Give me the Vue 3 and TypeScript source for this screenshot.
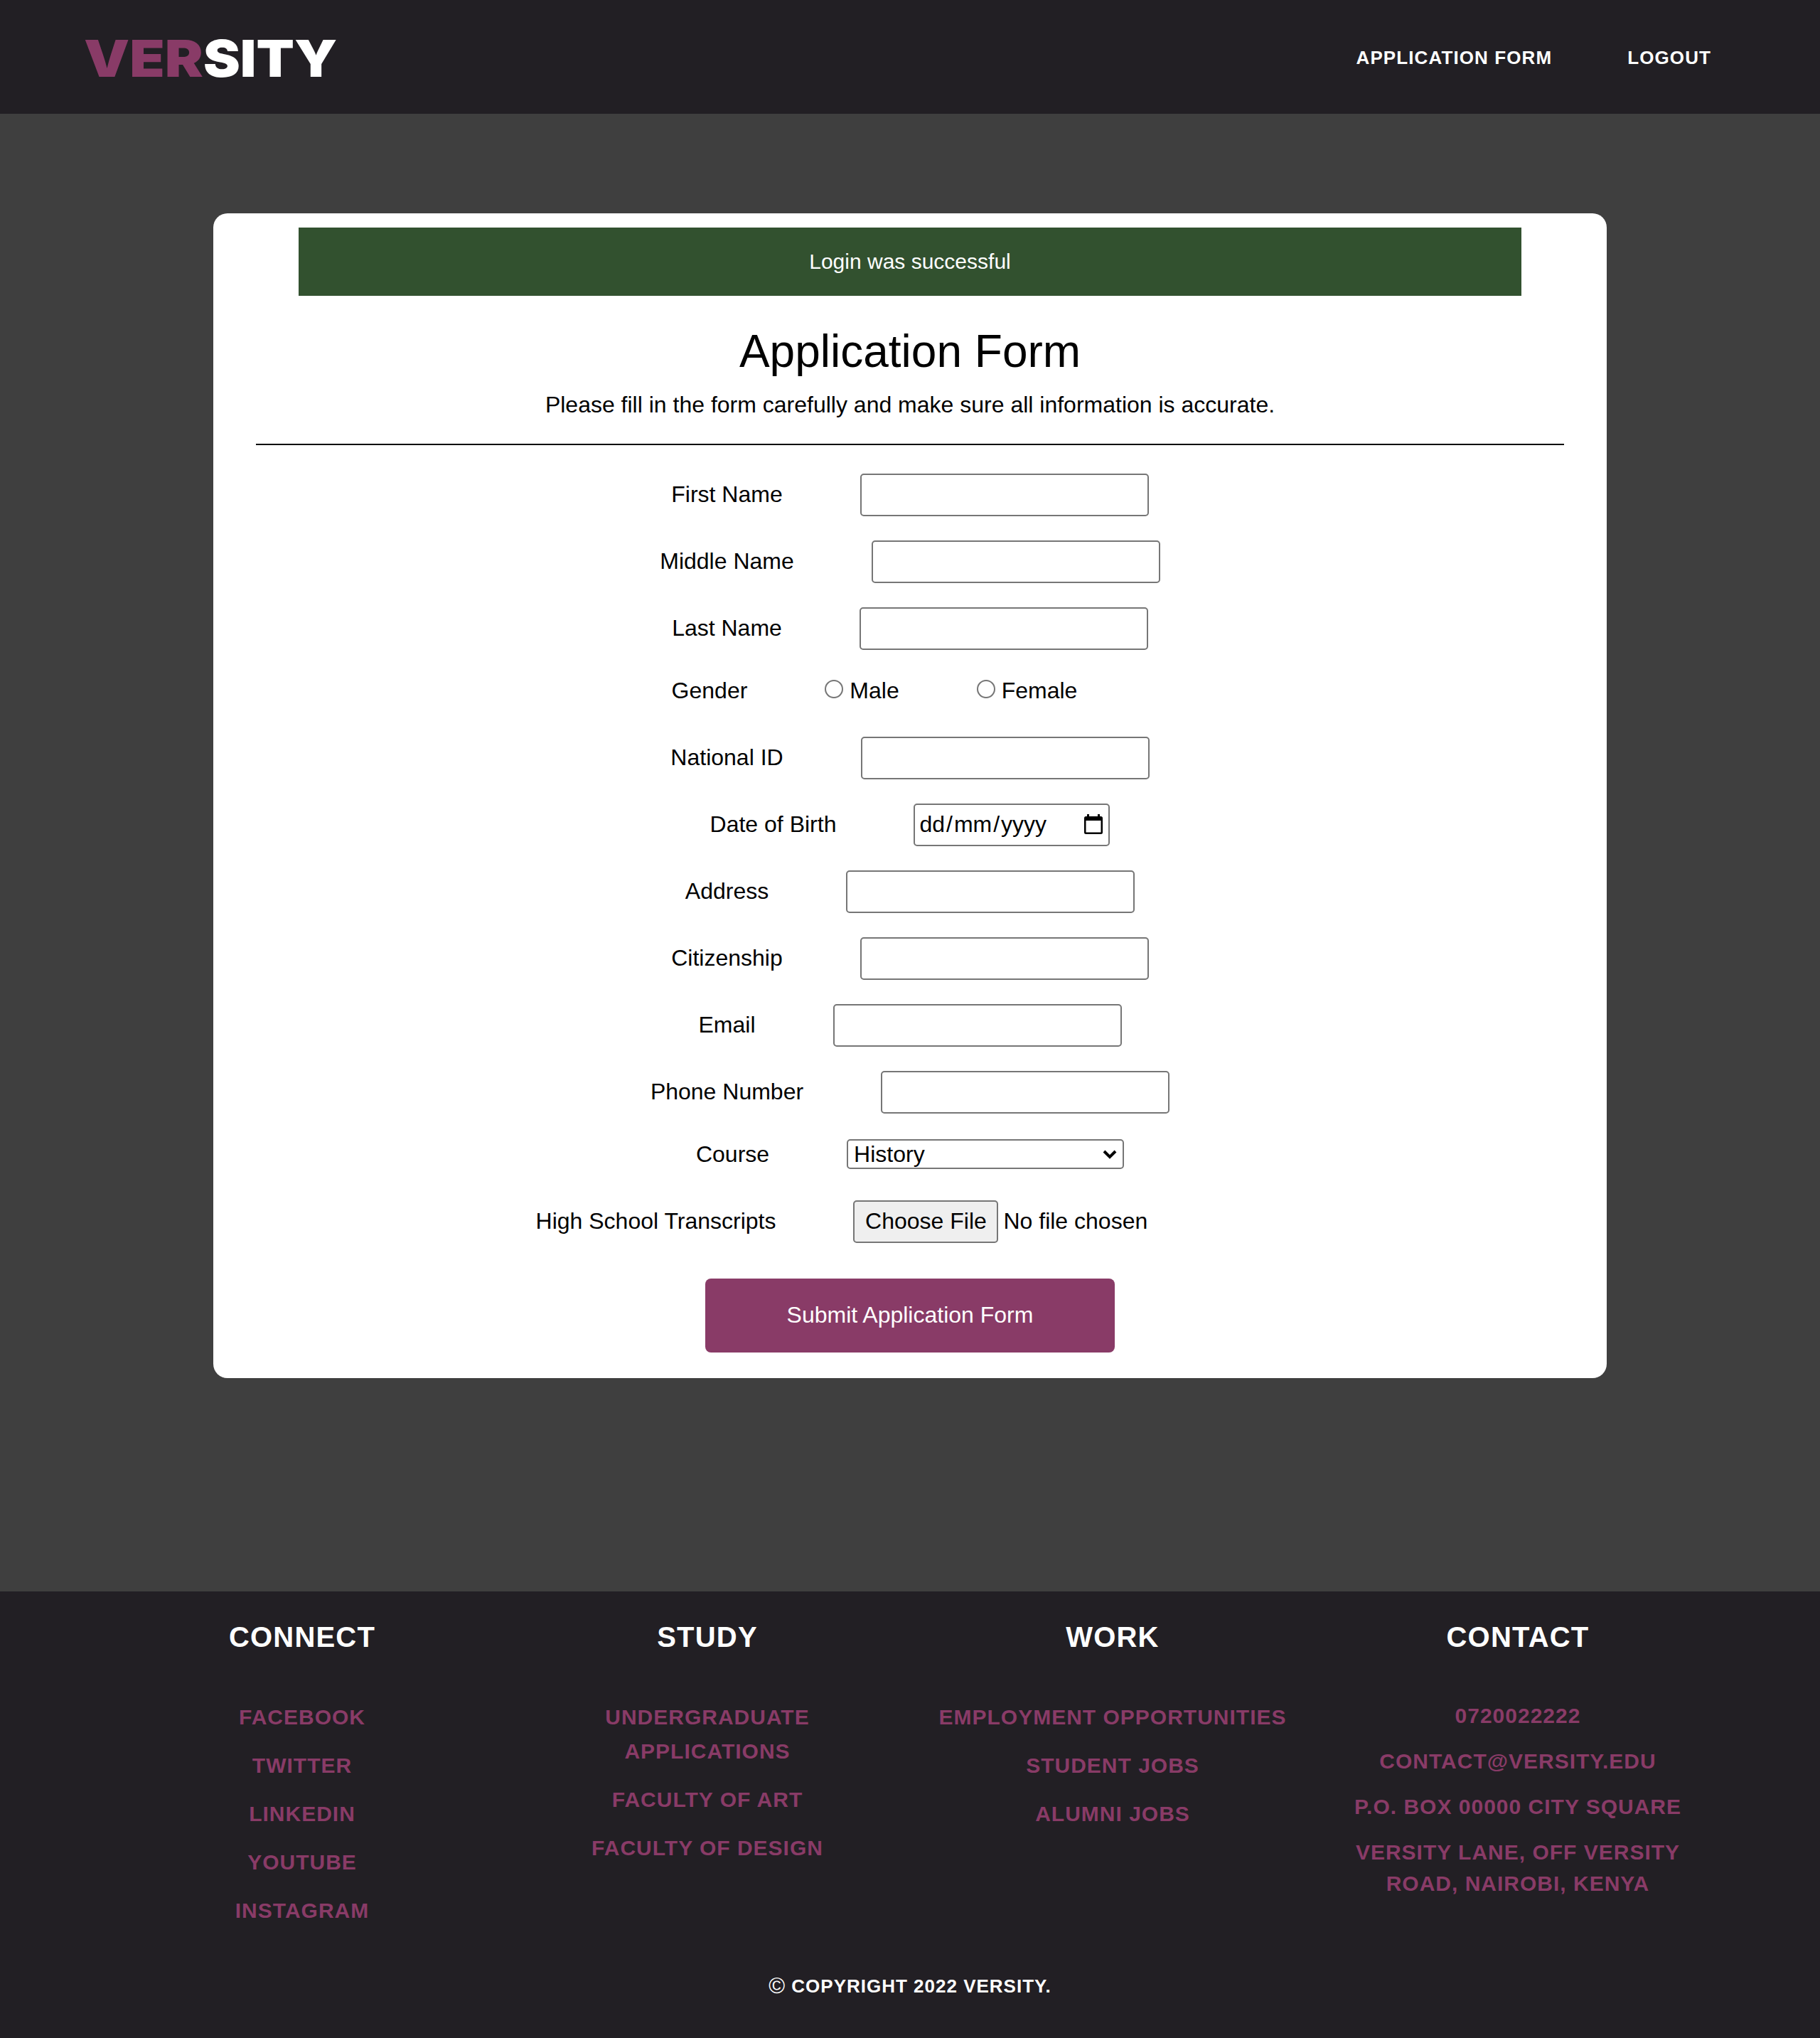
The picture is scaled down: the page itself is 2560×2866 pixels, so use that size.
<script setup lang="ts">
interface Column {
  title: string
  items: string[]
  plain?: boolean
}

const navLinks: string[] = ['Application Form', 'Logout']
const nameFields: string[] = ['First Name', 'Middle Name', 'Last Name']
const contactFields: string[] = ['Address', 'Citizenship', 'Email', 'Phone Number']

const columns: Column[] = [
  { title: 'Connect', items: ['Facebook', 'Twitter', 'LinkedIn', 'YouTube', 'Instagram'] },
  { title: 'Study', items: ['Undergraduate Applications', 'Faculty of Art', 'Faculty of Design'] },
  { title: 'Work', items: ['Employment Opportunities', 'Student Jobs', 'Alumni Jobs'] },
  {
    title: 'Contact',
    plain: true,
    items: ['0720022222', 'contact@versity.edu', 'P.O. Box 00000 City Square', 'Versity Lane, Off Versity Road, Nairobi, Kenya'],
  },
]
</script>

<template>
  <div class="page">
    <header class="nav">
      <div class="logo"><span class="accent">VER</span><span class="rest">SITY</span></div>
      <nav class="links">
        <a v-for="link in navLinks" :key="link">{{ link }}</a>
      </nav>
    </header>

    <main class="main">
      <section class="card">
        <div class="flash">Login was successful</div>
        <h1>Application Form</h1>
        <p class="intro">Please fill in the form carefully and make sure all information is accurate.</p>
        <form class="form" @submit.prevent>
          <div v-for="f in nameFields" :key="f" class="row">
            <label>{{ f }}</label>
            <input type="text" class="box" />
          </div>
          <div class="row short">
            <label>Gender</label>
            <input type="radio" name="gender" class="radio" /><label>Male</label>
            <input type="radio" name="gender" class="radio" /><label class="last">Female</label>
          </div>
          <div class="row">
            <label>National ID</label>
            <input type="text" class="box" />
          </div>
          <div class="row">
            <label>Date of Birth</label>
            <div class="box date">
              <span class="part">dd</span><span>/</span><span class="part">mm</span><span>/</span><span class="part">yyyy</span>
              <svg class="calendar" width="26" height="28" viewBox="0 0 26 28">
                <path fill-rule="evenodd" d="M4 0h3v3h12V0h3v3h1.500a2.500 2.500 0 0 1 2.500 2.500v20a2.500 2.500 0 0 1-2.500 2.500h-21A2.500 2.500 0 0 1 0 25.500v-20A2.500 2.500 0 0 1 2.500 3H4zM2.500 9v16.500h21V9z" />
              </svg>
            </div>
          </div>
          <div v-for="f in contactFields" :key="f" class="row">
            <label>{{ f }}</label>
            <input type="text" class="box" />
          </div>
          <div class="row short">
            <label>Course</label>
            <div class="select">
              <span>History</span>
              <svg width="20" height="13" viewBox="0 0 20 13">
                <path d="M2 2l8 8 8-8" fill="none" stroke="#000" stroke-width="4" />
              </svg>
            </div>
          </div>
          <div class="row">
            <label>High School Transcripts</label>
            <div class="file">
              <button type="button" class="choose">Choose File</button>
              <span>No file chosen</span>
            </div>
          </div>
          <button type="submit" class="submit">Submit Application Form</button>
        </form>
      </section>
    </main>

    <footer class="footer">
      <div class="columns">
        <div v-for="c in columns" :key="c.title" class="column" :class="{ plain: c.plain }">
          <h2>{{ c.title }}</h2>
          <ul>
            <li v-for="item in c.items" :key="item">{{ item }}</li>
          </ul>
        </div>
      </div>
      <p class="copyright"><span class="mark">©</span> Copyright 2022 Versity.</p>
    </footer>
  </div>
</template>

<style>
body {
  margin: 0;
}
</style>

<style scoped>
* {
  box-sizing: border-box;
}
.page {
  width: 2560px;
  height: 2866px;
  display: flex;
  flex-direction: column;
  overflow: hidden;
  background: #3f3f3f;
  color: #000;
  font-family: "Liberation Sans", Arial, sans-serif;
  font-size: 32px;
}
h1, h2, p, ul {
  margin: 0;
  padding: 0;
  list-style: none;
}
button, input {
  font: inherit;
  margin: 0;
}
.nav {
  height: 160px;
  flex: none;
  background: #221f24;
  display: flex;
  justify-content: space-between;
  padding: 0 153px 0 120px;
  color: #fff;
}
.logo {
  display: flex;
  font-family: Inter, "Liberation Sans", sans-serif;
  font-weight: 900;
  font-size: 72px;
  line-height: 164px;
}
.accent {
  margin-left: -2px;
  color: #893b67;
  transform: scaleX(1.123);
  transform-origin: left;
}
.rest {
  margin-left: 19px;
  transform: scaleX(1.081);
  transform-origin: left;
}
.links {
  display: flex;
  gap: 106px;
  font-weight: 700;
  font-size: 26px;
  line-height: 162px;
  letter-spacing: 1.100px;
  text-transform: uppercase;
}
.main {
  height: 2078px;
  flex: none;
  padding: 140px 300px 0;
}
.card {
  height: 1638px;
  background: #fff;
  border-radius: 20px;
  padding-top: 20px;
  text-align: center;
}
.flash {
  margin: 0 120px;
  height: 96px;
  line-height: 96px;
  background: #32512f;
  color: #fff;
  font-size: 30px;
}
h1 {
  margin-top: 36px;
  font-weight: 400;
  font-size: 64px;
  line-height: 84px;
}
.intro {
  margin: 0 60px;
  height: 90px;
  line-height: 66px;
  border-bottom: 2px solid #000;
}
.form {
  padding-top: 23px;
  display: flex;
  flex-direction: column;
  align-items: center;
}
.row {
  display: flex;
  height: 94px;
  line-height: 92px;
  white-space: nowrap;
}
.row label {
  margin-right: 109px;
}
.row .last {
  margin-right: 100px;
}
.short {
  height: 88px;
  line-height: 80px;
}
.box {
  appearance: none;
  width: 406px;
  height: 60px;
  margin-top: 17px;
  border: 2px solid #767676;
  border-radius: 5px;
  background: #fff;
  outline: none;
}
.date {
  display: flex;
  width: 276px;
  padding: 0 8px 0 4px;
  line-height: 55px;
}
.part {
  padding: 0 2px;
}
.calendar {
  margin: 13px 0 0 auto;
}
.radio {
  appearance: none;
  width: 26px;
  height: 26px;
  margin: 25px 9px 0 0;
  border: 2px solid #767676;
  border-radius: 50%;
  background: #fff;
}
.select {
  display: flex;
  justify-content: space-between;
  width: 390px;
  height: 42px;
  margin-top: 19px;
  padding: 0 8px;
  border: 2px solid #767676;
  border-radius: 5px;
  line-height: 38px;
}
.select svg {
  margin-top: 13px;
}
.file {
  display: flex;
  width: 606px;
}
.choose {
  width: 204px;
  height: 60px;
  margin: 17px 7px 0 0;
  padding: 0 0 2px;
  border: 2px solid #767676;
  border-radius: 5px;
  background: #efefef;
  color: #000;
  line-height: 54px;
}
.submit {
  width: 576px;
  height: 104px;
  margin-top: 33px;
  padding: 0 0 2px;
  border: 0;
  border-radius: 8px;
  background: #893b67;
  color: #fff;
}
.footer {
  height: 628px;
  flex: none;
  background: #221f24;
  font-weight: 700;
  letter-spacing: 1px;
  text-align: center;
  text-transform: uppercase;
}
.columns {
  display: flex;
  justify-content: center;
  gap: 70px;
  height: 514px;
  padding-top: 41px;
}
.column {
  width: 500px;
}
h2 {
  margin-bottom: 66px;
  color: #fff;
  font-size: 40px;
  line-height: 46px;
  letter-spacing: 1.200px;
}
li {
  margin-bottom: 20px;
  color: #893b67;
  font-size: 30px;
  line-height: 48px;
}
.plain li {
  line-height: 44px;
}
.copyright {
  color: #fff;
  font-size: 26px;
  line-height: 82px;
}
.mark {
  font-size: 31px;
  font-weight: 400;
  line-height: 0;
  vertical-align: -1px;
}
</style>
